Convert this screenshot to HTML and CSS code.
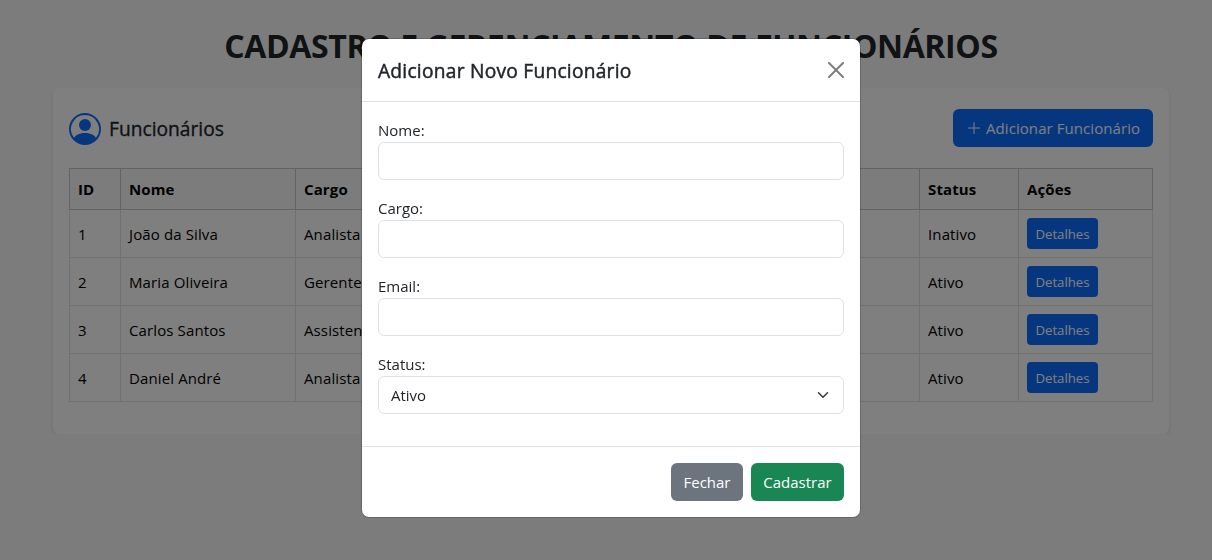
FILE: index.html
```html
<!DOCTYPE html>
<html lang="pt-BR">
<head>
<meta charset="utf-8">
<title>Cadastro e Gerenciamento de Funcionários</title>
<link rel="stylesheet" href="styles.css">
</head>
<body>
<main class="container">
  <h1 class="page-title">CADASTRO E GERENCIAMENTO DE FUNCIONÁRIOS</h1>
  <section class="card">
    <div class="card-head">
      <svg class="person" viewBox="0 0 16 16" fill="currentColor"><path d="M11 6a3 3 0 1 1-6 0 3 3 0 0 1 6 0"/><path fill-rule="evenodd" d="M0 8a8 8 0 1 1 16 0A8 8 0 0 1 0 8m8-7a7 7 0 0 0-5.468 11.37C3.242 11.226 4.805 10 8 10s4.757 1.225 5.468 2.37A7 7 0 0 0 8 1"/></svg>
      <h2 class="card-title">Funcionários</h2>
      <button class="btn primary add"><svg class="plus" viewBox="0 0 16 16" fill="currentColor"><path fill-rule="evenodd" d="M8 2a.5.5 0 0 1 .5.5v5h5a.5.5 0 0 1 0 1h-5v5a.5.5 0 0 1-1 0v-5h-5a.5.5 0 0 1 0-1h5v-5A.5.5 0 0 1 8 2"/></svg><span>Adicionar Funcionário</span></button>
    </div>
    <table class="table">
      <colgroup><col class="c-id"><col class="c-name"><col class="c-role"><col><col class="c-status"><col class="c-actions"></colgroup>
      <thead><tr><th>ID</th><th>Nome</th><th>Cargo</th><th>Email</th><th>Status</th><th>Ações</th></tr></thead>
      <tbody>
        <tr><td>1</td><td>João da Silva</td><td>Analista</td><td></td><td>Inativo</td><td><button class="btn primary small">Detalhes</button></td></tr>
        <tr><td>2</td><td>Maria Oliveira</td><td>Gerente</td><td></td><td>Ativo</td><td><button class="btn primary small">Detalhes</button></td></tr>
        <tr><td>3</td><td>Carlos Santos</td><td>Assistente</td><td></td><td>Ativo</td><td><button class="btn primary small">Detalhes</button></td></tr>
        <tr><td>4</td><td>Daniel André</td><td>Analista</td><td></td><td>Ativo</td><td><button class="btn primary small">Detalhes</button></td></tr>
      </tbody>
    </table>
  </section>
</main>
<div class="backdrop"></div>
<div class="modal">
  <div class="modal-head">
    <h2 class="modal-title">Adicionar Novo Funcionário</h2>
    <svg class="close" viewBox="0 0 16 16"><path d="M.293.293a1 1 0 0 1 1.414 0L8 6.586 14.293.293a1 1 0 1 1 1.414 1.414L9.414 8l6.293 6.293a1 1 0 0 1-1.414 1.414L8 9.414l-6.293 6.293a1 1 0 0 1-1.414-1.414L6.586 8 .293 1.707a1 1 0 0 1 0-1.414z"/></svg>
  </div>
  <form class="modal-body">
    <div class="field"><label>Nome:</label><input class="control" type="text"></div>
    <div class="field"><label>Cargo:</label><input class="control" type="text"></div>
    <div class="field"><label>Email:</label><input class="control" type="text"></div>
    <div class="field"><label>Status:</label>
      <div class="control select"><span>Ativo</span><svg class="chevron" viewBox="0 0 16 16"><path fill="none" stroke="#343a40" stroke-linecap="round" stroke-linejoin="round" stroke-width="2" d="m2 5 6 6 6-6"/></svg></div>
    </div>
  </form>
  <div class="modal-foot">
    <button class="btn secondary">Fechar</button>
    <button class="btn success">Cadastrar</button>
  </div>
</div>
</body>
</html>
```

FILE: styles.css
```css
* { box-sizing: border-box; }
html { overflow: hidden; }
body {
  margin: 0;
  background: #f8f9fa;
  color: #212529;
  font: 400 15px/24px "Segoe UI", "Open Sans", "Noto Sans", sans-serif;
}
h1, h2 { margin: 0; }
.container { width: 1116px; margin-left: 53px; padding-top: 22px; }
.page-title {
  margin-bottom: 18px;
  font-size: 32px;
  line-height: 48px;
  font-weight: 700;
  letter-spacing: -.37px;
  text-align: center;
  white-space: nowrap;
}
.card {
  height: 346px;
  padding: 21px 16px 0;
  background: #fff;
  border-radius: 6px;
  box-shadow: 0 2px 4px rgba(0, 0, 0, .1);
}
.card-head { display: flex; align-items: center; margin-bottom: 21px; }
.person { width: 32px; height: 32px; margin-right: 8px; margin-top: 1px; color: #0d6efd; }
.card-title {
  padding-top: 1px;
  font-size: 19.2px;
  font-weight: 400;
  line-height: 24px;
  -webkit-text-stroke: .35px;
}
.btn {
  height: 38px;
  padding: 0 12px;
  border: 0;
  border-radius: 6px;
  color: #fff;
  font: inherit;
  white-space: nowrap;
}
.primary { background: #0d6efd; }
.secondary { background: #6c757d; width: 72px; }
.success { background: #198754; width: 93px; }
.add { display: flex; align-items: center; gap: 4px; width: 200px; margin-left: auto; padding: 0 13px; letter-spacing: .07px; }
.plus { width: 16px; height: 16px; flex: none; }
.small { display: block; width: 71px; height: 31px; padding: 0; border-radius: 4px; font-size: 13.2px; }
.table { width: 1084px; table-layout: fixed; border-collapse: collapse; color: #000; letter-spacing: .12px; }
.table th, .table td { padding: 0 8px; text-align: left; border: 1px solid #dee2e6; white-space: nowrap; }
.table th { height: 41px; background: #f8f9fa; border-color: #c6c7c8; font-weight: 700; }
.table td { height: 48px; }
.c-id { width: 51px; }
.c-name { width: 175px; }
.c-role { width: 240px; }
.c-status { width: 99px; }
.c-actions { width: 134px; }
.backdrop { position: fixed; inset: 0; background: rgba(0, 0, 0, .5); }
.modal {
  position: absolute;
  top: 38px;
  left: 361px;
  width: 500px;
  background: #fff;
  background-clip: padding-box;
  border: 1px solid rgba(0, 0, 0, .175);
  border-radius: 8px;
}
.modal-head {
  display: flex;
  align-items: center;
  justify-content: space-between;
  height: 63px;
  padding: 0 16px;
  border-bottom: 1px solid #dee2e6;
}
.modal-title {
  padding-top: 1px;
  font-size: 19.2px;
  font-weight: 400;
  line-height: 30px;
  letter-spacing: .24px;
  -webkit-text-stroke: .45px;
}
.close { width: 16px; height: 16px; opacity: .5; }
.modal-body { padding: 16px 16px 0; }
.field { margin-bottom: 16px; }
.field:last-child { margin-bottom: 0; }
.field label { display: block; height: 24px; }
.control {
  display: block;
  width: 100%;
  height: 38px;
  padding: 0 12px;
  border: 1px solid #dee2e6;
  border-radius: 6px;
  background: #fff;
  font: inherit;
}
.select { display: flex; align-items: center; justify-content: space-between; }
.chevron { width: 16px; height: 12px; }
.modal-foot {
  display: flex;
  justify-content: flex-end;
  gap: 8px;
  margin-top: 32px;
  padding: 16px;
  border-top: 1px solid #dee2e6;
}
```
